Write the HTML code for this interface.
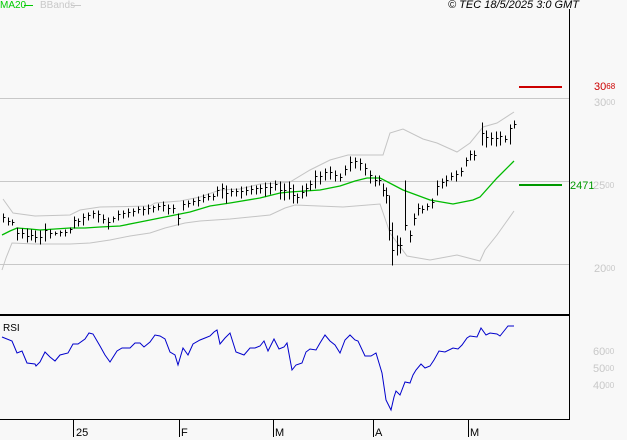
<!DOCTYPE html>
<html><head><meta charset="utf-8"><style>
html,body{margin:0;padding:0;background:#f8f8f8;}
body{width:627px;height:440px;overflow:hidden;position:relative;font-family:"Liberation Sans",sans-serif;}
.t{position:absolute;font-size:11px;line-height:11px;white-space:nowrap;}
sup{font-size:8px;vertical-align:top;position:relative;top:-1px;}
</style></head><body>
<svg width="627" height="440" style="position:absolute;left:0;top:0" shape-rendering="crispEdges">
<g stroke="#c8c8c8" stroke-width="1">
<line x1="0" y1="98.5" x2="569" y2="98.5"/>
<line x1="0" y1="181.5" x2="569" y2="181.5"/>
<line x1="0" y1="264.5" x2="569" y2="264.5"/>
</g>
<line x1="569.5" y1="9" x2="569.5" y2="420" stroke="#000" stroke-width="1.2"/>
<line x1="0" y1="315" x2="570" y2="315" stroke="#000" stroke-width="2"/>
<line x1="0" y1="419.5" x2="570" y2="419.5" stroke="#000" stroke-width="1"/>
<g stroke="#000" stroke-width="1">
<line x1="73.5" y1="419" x2="73.5" y2="437"/>
<line x1="179.5" y1="419" x2="179.5" y2="437"/>
<line x1="273.5" y1="419" x2="273.5" y2="437"/>
<line x1="373.5" y1="419" x2="373.5" y2="437"/>
<line x1="468.5" y1="419" x2="468.5" y2="437"/>
</g>
<line x1="519" y1="87" x2="562" y2="87" stroke="#cc0000" stroke-width="2"/>
<line x1="519" y1="185" x2="562" y2="185" stroke="#009900" stroke-width="2"/>
<g fill="none" stroke="#c4c4c4" stroke-width="1" shape-rendering="auto">
<polyline points="3,199 13,213 35,216 70,215 80,210 100,207 150,206 155,203 180,201 200,197 220,190 240,189 260,184 280,183 290,182 310,170 330,160 348,155 383,155 390,133 403,129 423,139 437,143 457,152 470,143 483,127 497,123 514,112"/>
<polyline points="2,270 6,258 12,243 35,244 70,244 90,243 110,240 130,236 150,233 165,228 185,223 200,221 230,219 270,215 285,208 295,205 343,207 380,204 390,233 407,256 430,260 457,255 480,261 485,250 497,235 514,211"/>
</g>
<polyline fill="none" stroke="#00bb00" stroke-width="1.3" shape-rendering="auto" points="2,235 10,231 17,228 30,229 40,230 55,229 70,228 85,228 100,227 120,226 140,222 160,218 175,215 190,212 210,206 230,203 260,198 280,193 290,192 320,190 340,186 355,181 367,178 380,178 403,190 430,200 453,204 473,200 480,197 497,178 514,161"/>
<path transform="translate(0.5,0.5)" stroke="#000" stroke-width="1" fill="none" d="
M3,213V222M3,217H5 M8,217V225M8,221H10 M12,219V225M12,222H14 M17,227V240M17,233H19 M22,228V238M22,233H24 M27,228V242M27,236H29 M31,229V240M31,235H33 M35,230V242M35,237H37 M40,230V244M40,237H42 M45,223V241M45,230H47 M50,229V238M50,233H52 M55,231V235M55,233H57 M60,230V236M60,232H62 M65,229V236M65,232H67 M70,227V233M70,229H72 M74,216V228M74,220H76 M78,218V226M78,221H80 M83,213V225M83,217H85 M88,212V220M88,215H90 M93,210V218M93,213H95 M98,210V222M98,214H100 M103,214V223M103,219H105 M108,217V229M108,222H110 M113,216V222M113,218H115 M118,210V220M118,214H120 M123,210V218M123,213H125 M128,208V217M128,212H130 M133,208V216M133,211H135 M138,206V213M138,209H140 M143,206V215M143,209H145 M148,204V214M148,208H150 M153,205V212M153,207H155 M158,203V210M158,206H160 M163,201V211M163,205H165 M168,204V214M168,208H170 M173,204V213M173,208H175 M178,213V225M178,218H180 M183,200V210M183,204H185 M188,200V207M188,203H190 M193,198V205M193,201H195 M198,196V206M198,200H200 M203,194V202M203,197H205 M208,193V200M208,196H210 M213,193V200M213,196H215 M217,186V196M217,190H219 M222,183V198M222,188H224 M226,185V203M226,193H228 M231,188V196M231,191H233 M236,188V196M236,191H238 M241,186V198M241,191H243 M246,186V195M246,190H248 M251,185V194M251,189H253 M256,185V194M256,188H258 M260,184V193M260,188H262 M265,182V196M265,187H267 M270,182V194M270,187H272 M275,180V190M275,184H277 M280,181V199M280,190H282 M284,183V200M284,190H286 M289,181V199M289,188H291 M293,184V203M293,195H295 M297,193V203M297,197H299 M302,185V198M302,192H304 M306,183V196M306,188H308 M310,180V190M310,184H312 M315,170V188M315,176H317 M320,171V184M320,176H322 M325,168V180M325,172H327 M330,166V179M330,172H332 M335,170V181M335,175H337 M340,173V181M340,177H342 M345,165V175M345,169H347 M350,156V171M350,162H352 M355,157V168M355,161H357 M360,158V170M360,163H362 M365,163V175M365,168H367 M370,170V183M370,175H372 M375,175V186M375,180H377 M379,175V185M379,180H381 M383,183V196M383,190H385 M386,187V203M386,195H388 M389,195V240M389,230H391 M392,222V265M392,250H394 M397,235V255M397,245H399 M400,237V253M400,245H402 M405,180V230M405,225H407 M410,230V242M410,235H412 M414,213V225M414,218H416 M418,203V215M418,208H420 M422,205V213M422,209H424 M427,203V210M427,206H429 M432,198V208M432,202H434 M437,180V195M437,186H439 M442,178V188M442,182H444 M446,175V186M446,180H448 M451,172V180M451,176H453 M456,170V181M456,174H458 M461,167V176M461,171H463 M466,157V166M466,160H468 M470,150V160M470,154H472 M474,150V160M474,155H476 M482,122V145M482,133H484 M486,130V147M486,137H488 M491,132V145M491,138H493 M496,131V146M496,138H498 M500,131V145M500,136H502 M505,135V142M505,139H507 M510,124V144M510,128H512 M514,120V128M514,124H516"/>
<polyline fill="none" stroke="#0000cc" stroke-width="1" shape-rendering="auto" points="2,337 12,341 17,353 22,351 27,363 35,364 36,366 40,362 45,352 50,357 55,361 60,355 68,353 73,344 78,344 85,339 89,333 93,334 100,346 105,355 110,362 117,351 122,348 130,348 135,343 140,343 144,347 150,342 155,335 160,336 165,339 170,352 175,355 178,365 183,348 188,355 193,344 200,340 205,338 210,336 214,332 217,330 220,344 225,338 230,333 236,352 244,355 250,348 255,348 260,346 264,341 268,351 274,339 279,349 284,347 287,343 292,370 296,365 302,363 306,352 310,349 316,350 320,343 325,335 330,341 335,345 340,353 345,340 350,335 355,340 358,341 365,356 371,356 376,353 382,373 386,400 391,410 394,397 396,391 400,395 405,382 410,383 413,375 416,370 421,364 425,368 430,366 434,360 439,351 445,352 453,348 458,349 462,345 467,338 470,336 477,337 481,328 486,335 490,333 497,334 500,336 504,331 508,326 514,326"/>
<line x1="24" y1="5.5" x2="33" y2="5.5" stroke="#00cc00" stroke-width="1"/>
<line x1="71" y1="5.5" x2="81" y2="5.5" stroke="#c8c8c8" stroke-width="1"/>
</svg>
<div class="t" style="left:0;top:0;color:#00cc00;font-size:10px;">MA20</div>
<div class="t" style="left:40px;top:0;color:#c8c8c8;font-size:10px;">BBands</div>
<div class="t" style="left:448px;top:0;color:#000;font-style:italic;">© TEC 18/5/2025 3:0 GMT</div>
<div class="t" style="left:594px;top:82px;color:#cc0000;">30<sup>68</sup></div>
<div class="t" style="left:594px;top:98px;color:#c8c8c8;">30<sup>00</sup></div>
<div class="t" style="left:570px;top:181px;color:#009900;">2471</div>
<div class="t" style="left:593px;top:181px;color:#c8c8c8;">25<sup>00</sup></div>
<div class="t" style="left:594px;top:264px;color:#c8c8c8;">20<sup>00</sup></div>
<div class="t" style="left:593px;top:347px;color:#c8c8c8;">60<sup>00</sup></div>
<div class="t" style="left:593px;top:364px;color:#c8c8c8;">50<sup>00</sup></div>
<div class="t" style="left:593px;top:381px;color:#c8c8c8;">40<sup>00</sup></div>
<div class="t" style="left:3px;top:323px;color:#000;font-size:10px;">RSI</div>
<div class="t" style="left:76px;top:428px;color:#000;">25</div>
<div class="t" style="left:181px;top:428px;color:#000;">F</div>
<div class="t" style="left:275px;top:428px;color:#000;">M</div>
<div class="t" style="left:375px;top:428px;color:#000;">A</div>
<div class="t" style="left:470px;top:428px;color:#000;">M</div>
</body></html>
